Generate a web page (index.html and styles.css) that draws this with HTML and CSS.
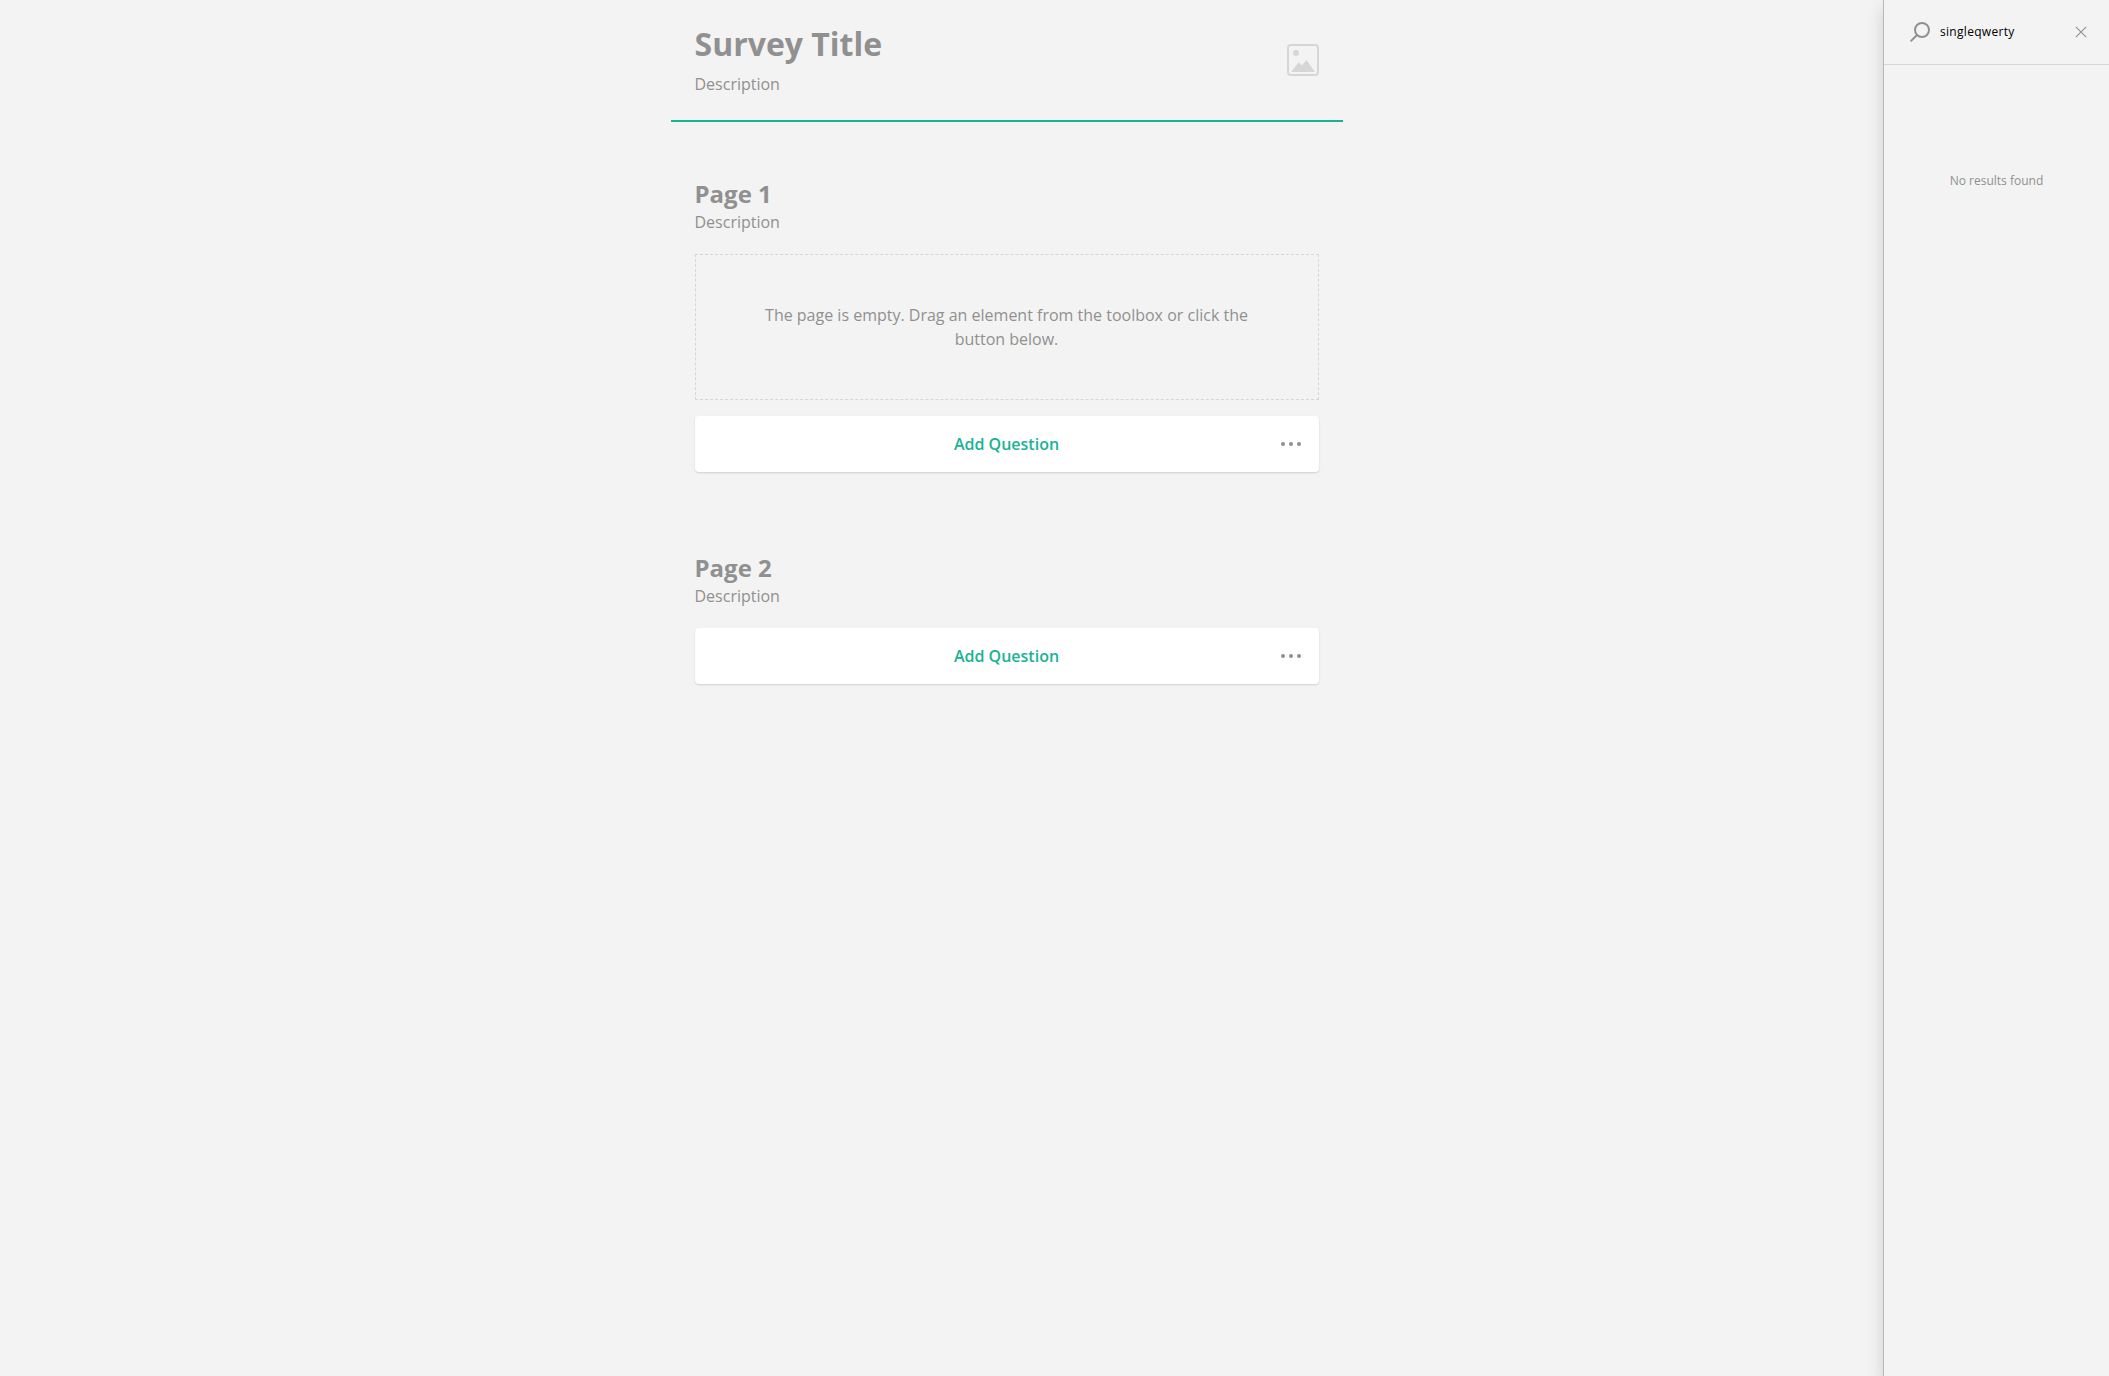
FILE: index.html
```html
<!DOCTYPE html>
<html lang="en">
<head>
<meta charset="utf-8">
<title>Survey Creator</title>
<link rel="stylesheet" href="styles.css">
</head>
<body>
<div class="creator">
  <main class="designer">
    <div class="survey">
      <header class="survey-header">
        <div>
          <h1 class="survey-title">Survey Title</h1>
          <p class="description">Description</p>
        </div>
        <svg class="logo-placeholder" viewBox="0 0 32 32" width="32" height="32">
          <rect x="1" y="1" width="30" height="30" rx="3" fill="none" stroke="#d6d6d6" stroke-width="2"/>
          <circle cx="9" cy="9" r="3" fill="#d6d6d6"/>
          <path d="M4 28L11.5 18.5L15 21.5L19.5 16L28 28Z" fill="#d6d6d6"/>
        </svg>
      </header>
      <section class="page">
        <h2 class="page-title">Page 1</h2>
        <p class="description">Description</p>
        <div class="placeholder">The page is empty. Drag an element from the toolbox or click the button below.</div>
        <div class="add-question">
          <span class="add-label">Add Question</span>
          <svg class="dots" viewBox="0 0 24 24" width="24" height="24"><circle cx="4" cy="12" r="2"/><circle cx="12" cy="12" r="2"/><circle cx="20" cy="12" r="2"/></svg>
        </div>
      </section>
      <section class="page">
        <h2 class="page-title">Page 2</h2>
        <p class="description">Description</p>
        <div class="add-question">
          <span class="add-label">Add Question</span>
          <svg class="dots" viewBox="0 0 24 24" width="24" height="24"><circle cx="4" cy="12" r="2"/><circle cx="12" cy="12" r="2"/><circle cx="20" cy="12" r="2"/></svg>
        </div>
      </section>
    </div>
  </main>
  <aside class="toolbox">
    <div class="search">
      <svg viewBox="0 0 24 24" width="24" height="24" fill="none" stroke="#909090" stroke-width="2"><circle cx="14" cy="10" r="7"/><path d="M9.2 14.8L2.6 21.4"/></svg>
      <span class="search-text">singleqwerty</span>
      <svg viewBox="0 0 16 16" width="16" height="16" fill="none" stroke="#909090" stroke-width="1.1"><path d="M2.8 2.8L13.2 13.2M13.2 2.8L2.8 13.2"/></svg>
    </div>
    <p class="no-results">No results found</p>
  </aside>
</div>
</body>
</html>
```
FILE: styles.css
```css
* {
  box-sizing: border-box;
}

body,
h1,
h2,
p {
  margin: 0;
}

body {
  background: #f3f3f3;
  color: #909090;
  font: 16px/24px "Open Sans", sans-serif;
}

.creator {
  display: flex;
  height: 100vh;
  overflow: hidden;
}

.designer {
  flex: 1;
  padding-left: 670.5px;
}

.survey {
  width: 672px;
}

.survey-header {
  display: flex;
  justify-content: space-between;
  height: 122px;
  padding: 22px 24px 0;
  border-bottom: 2px solid #19b394;
}

.survey-title {
  margin-bottom: 6px;
  font-size: 32px;
  line-height: 44px;
}

.logo-placeholder {
  margin-top: 22px;
}

.page {
  padding: 56px 24px 24px;
}

.page-title {
  font-size: 24px;
  line-height: 32px;
}

.placeholder {
  margin-top: 20px;
  padding: 48px 64px;
  border: 1px dashed #d6d6d6;
  text-align: center;
}

.add-question {
  display: grid;
  grid-template-columns: 1fr auto 1fr;
  align-items: center;
  height: 56px;
  margin-top: 16px;
  padding: 0 16px;
  border-radius: 4px;
  background: #fff;
  box-shadow: 0 1px 2px rgba(0, 0, 0, 0.15);
}

.description + .add-question {
  margin-top: 20px;
}

.add-label {
  grid-column: 2;
  color: #19b394;
  font-weight: 600;
}

.dots {
  justify-self: end;
  fill: #909090;
}

.toolbox {
  width: 226px;
  border-left: 1px solid #b8b8b8;
  background: #f3f3f3;
  box-shadow: 0 8px 16px rgba(0, 0, 0, 0.15);
  font-size: 12px;
}

.search {
  display: flex;
  align-items: center;
  height: 65px;
  padding: 0 20px 1px 24px;
  border-bottom: 1px solid #d6d6d6;
}

.search-text {
  flex: 1;
  margin-left: 8px;
  color: #000;
  letter-spacing: 0.3px;
}

.no-results {
  margin-top: 104px;
  text-align: center;
}
```
